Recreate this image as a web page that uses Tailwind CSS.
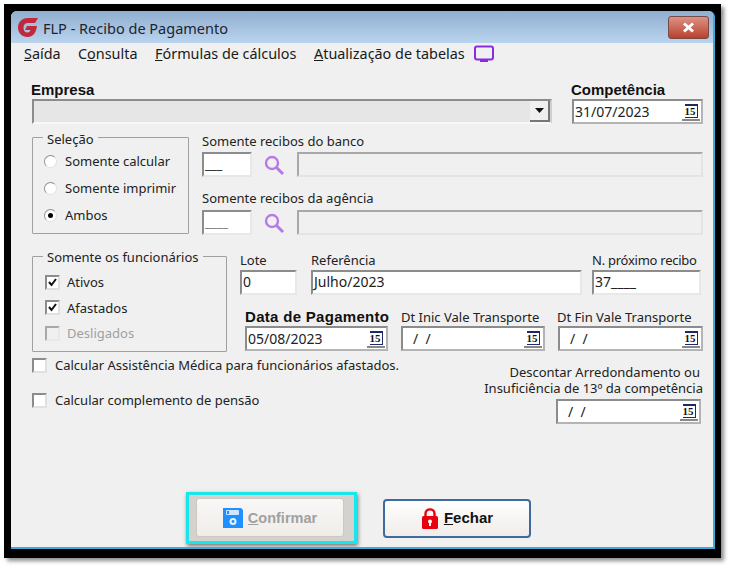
<!DOCTYPE html>
<html lang="pt-br">
<head>
<meta charset="UTF-8">
<title>FLP - Recibo de Pagamento</title>
<script src="https://cdn.jsdelivr.net/npm/@tailwindcss/browser@4"></script>
</head>
<body class="bg-white w-[734px] h-[571px] overflow-hidden font-['Noto_Sans',sans-serif] text-[13px] leading-[18px] text-[#222]">
<div class="ml-[4px] mt-[4px] w-[717px] h-[554px] bg-black pt-[7px] pl-[7px] pr-[6px] pb-[9px] shadow-[3px_3px_4px_rgba(0,0,0,0.45)]">
  <div class="w-[704px] h-[538px] bg-[#f0f0f0] rounded-t-[6px] border-r-2 border-b-2 border-[#3fa9d8] overflow-hidden">

    <!-- title bar -->
    <div class="h-[32px] flex items-center pl-[6px] bg-gradient-to-b from-[#90aecf] to-[#bad4ee]">
      <svg class="w-[22px] h-[22px]" viewBox="0 0 22 22"><path d="M21 2 H11 C4.500 2 1 6.500 1 11.500 C1 17 5 21 10.500 21 C16 21 19 17 20 10 H10 L8 14 H13.500 C13 15.500 12 16.500 10.500 16.500 C8 16.500 6.500 14.500 6.500 11.500 C6.500 9 8 7 11 7 H18 Z" fill="#c0283c"/></svg>
      <span class="ml-[4px] mt-[2px] text-[14.500px] text-[#1c2430]">FLP - Recibo de Pagamento</span>
      <div class="ml-auto mr-[4px] mt-[1px] w-[41px] h-[23px] rounded-[3px] border border-[#7a4a44] bg-gradient-to-b from-[#dc9184] to-[#b8402c] flex items-center justify-center">
        <svg class="w-[13px] h-[11px]" viewBox="0 0 13 11"><path d="M2 1.500 L11 9.500 M11 1.500 L2 9.500" stroke="#fff" stroke-width="3"/></svg>
      </div>
    </div>

    <!-- menu -->
    <div class="h-[24px] flex items-center pl-[13px] pb-[2px] text-[14.400px] text-[#1a1a1a]">
      <span class="w-[54px]"><u>S</u>aída</span>
      <span class="w-[77px]">C<u>o</u>nsulta</span>
      <span class="w-[159px]"><u>F</u>órmulas de cálculos</span>
      <span class="w-[159px]"><u>A</u>tualização de tabelas</span>
      <svg class="w-[22px] h-[20px]" viewBox="0 0 22 20"><rect x="2" y="2.500" width="18" height="13" rx="2" fill="none" stroke="#8a2be2" stroke-width="2"/><rect x="7" y="16" width="8" height="2" fill="#8a2be2"/></svg>
    </div>

    <div class="pl-[21px]">
      <!-- empresa / competencia -->
      <div class="flex mt-[15px] h-[43px]">
        <div class="w-[539px]">
          <div class="h-[17px] -ml-[1px] font-['Liberation_Sans',sans-serif] font-bold text-[15px] leading-[16px] text-[#111]">Empresa</div>
          <div class="w-[520px] h-[25px] bg-[#e6e6e6] border-2 border-t-[#8c8c8c] border-l-[#8c8c8c] border-r-[#d0d0d0] border-b-[#f8f8f8] flex justify-end">
            <div class="w-[20px] h-[21px] bg-[#f0f0f0] border-r-2 border-b-2 border-[#777] flex items-center justify-center">
              <svg class="w-[9px] h-[5px]" viewBox="0 0 9 5"><path d="M0 0 H9 L4.500 5 Z" fill="#111"/></svg>
            </div>
          </div>
        </div>
        <div>
          <div class="h-[17px] font-['Liberation_Sans',sans-serif] font-bold text-[15px] leading-[16px] text-[#111]">Competência</div>
          <div class="ml-[1px] w-[131px] h-[25px] bg-white border-2 border-t-[#8c8c8c] border-l-[#8c8c8c] border-r-[#b4b4b4] border-b-[#b4b4b4] flex items-center pl-[1px] text-[14px]">
            31/07/2023
            <span class="ml-auto mr-[1px] w-[18px] h-[19px] border-b-2 border-[#888] flex justify-center items-center"><span class="font-['Liberation_Serif',serif] font-bold text-[11px] leading-[11px] text-[#111] border border-t-2 border-[#1d2a6a] border-l-0 pr-[1px]">15</span></span>
          </div>
        </div>
      </div>

      <!-- selecao / recibos -->
      <div class="flex mt-[13px] h-[98px]">
        <fieldset class="w-[157px] h-[104px] -mt-[8px] border border-[#a0a0a0] rounded-[1px] pl-[11px]">
          <legend class="-ml-[1px] px-[4px] leading-[14px]"><span class="relative top-[2px]">Seleção</span></legend>
          <div class="flex flex-col gap-[9px] mt-[8px]">
            <label class="flex items-center gap-[8px] h-[18px]"><span class="w-[13px] h-[13px] rounded-full bg-white border border-[#909090] border-r-[#e0e0e0] border-b-[#e0e0e0]"></span>Somente calcular</label>
            <label class="flex items-center gap-[8px] h-[18px]"><span class="w-[13px] h-[13px] rounded-full bg-white border border-[#909090] border-r-[#e0e0e0] border-b-[#e0e0e0]"></span>Somente imprimir</label>
            <label class="flex items-center gap-[8px] h-[18px]"><span class="w-[13px] h-[13px] rounded-full bg-white border border-[#909090] border-r-[#e0e0e0] border-b-[#e0e0e0] flex items-center justify-center"><span class="w-[5px] h-[5px] rounded-full bg-black"></span></span>Ambos</label>
          </div>
        </fieldset>
        <div class="ml-[13px] -mt-[6px]">
          <div class="h-[18px]">Somente recibos do banco</div>
          <div class="flex items-center mt-[2px]">
            <div class="w-[50px] h-[25px] bg-white border-2 border-t-[#8c8c8c] border-l-[#8c8c8c] border-r-[#e8e8e8] border-b-[#e8e8e8] pl-[1px] leading-[20px] text-[#111]">___</div>
            <svg class="ml-[11px] w-[22px] h-[22px]" viewBox="0 0 22 22"><circle cx="9" cy="9" r="6" fill="none" stroke="#b57ae6" stroke-width="2.400"/><path d="M13.500 13.500 L20 20" stroke="#b57ae6" stroke-width="3"/></svg>
            <div class="ml-[12px] w-[406px] h-[25px] bg-[#f0f0f0] border-2 border-t-[#a8a8a8] border-l-[#a8a8a8] border-r-[#e4e4e4] border-b-[#e4e4e4]"></div>
          </div>
          <div class="h-[18px] mt-[12px]">Somente recibos da agência</div>
          <div class="flex items-center mt-[3px]">
            <div class="w-[50px] h-[25px] bg-white border-2 border-t-[#8c8c8c] border-l-[#8c8c8c] border-r-[#e8e8e8] border-b-[#e8e8e8] pl-[1px] leading-[20px] text-[#777]">____</div>
            <svg class="ml-[11px] w-[22px] h-[22px]" viewBox="0 0 22 22"><circle cx="9" cy="9" r="6" fill="none" stroke="#b57ae6" stroke-width="2.400"/><path d="M13.500 13.500 L20 20" stroke="#b57ae6" stroke-width="3"/></svg>
            <div class="ml-[12px] w-[406px] h-[25px] bg-[#f0f0f0] border-2 border-t-[#a8a8a8] border-l-[#a8a8a8] border-r-[#e4e4e4] border-b-[#e4e4e4]"></div>
          </div>
        </div>
      </div>

      <!-- funcionarios / datas -->
      <div class="flex mt-[21px] h-[100px]">
        <fieldset class="w-[195px] h-[103px] -mt-[8px] border border-[#a0a0a0] rounded-[1px] pl-[12px]">
          <legend class="-ml-[2px] px-[4px] leading-[14px]"><span class="relative top-[1px]">Somente os funcionários</span></legend>
          <div class="flex flex-col gap-[7.500px] mt-[10px]">
            <label class="flex items-center gap-[7px] h-[18px]"><span class="w-[15px] h-[15px] bg-white border-2 border-t-[#8c8c8c] border-l-[#8c8c8c] border-r-[#e0e0e0] border-b-[#e0e0e0] flex items-center justify-center"><svg class="w-[9px] h-[9px]" viewBox="0 0 9 9"><path d="M1 4 L3.500 7 L8 1" fill="none" stroke="#111" stroke-width="2"/></svg></span>Ativos</label>
            <label class="flex items-center gap-[7px] h-[18px]"><span class="w-[15px] h-[15px] bg-white border-2 border-t-[#8c8c8c] border-l-[#8c8c8c] border-r-[#e0e0e0] border-b-[#e0e0e0] flex items-center justify-center"><svg class="w-[9px] h-[9px]" viewBox="0 0 9 9"><path d="M1 4 L3.500 7 L8 1" fill="none" stroke="#111" stroke-width="2"/></svg></span>Afastados</label>
            <label class="flex items-center gap-[7px] h-[18px] text-[#a0a0a0]"><span class="w-[15px] h-[15px] bg-[#f0f0f0] border-2 border-t-[#a8a8a8] border-l-[#a8a8a8] border-r-[#e8e8e8] border-b-[#e8e8e8]"></span>Desligados</label>
          </div>
        </fieldset>
        <div class="ml-[13px] -mt-[6px]">
          <div class="flex">
            <div class="w-[71px]">
              <div class="h-[19px]">Lote</div>
              <div class="w-[57px] h-[25px] bg-white border-2 border-t-[#8c8c8c] border-l-[#8c8c8c] border-r-[#e8e8e8] border-b-[#e8e8e8] pl-[1px] leading-[20px] text-[14px]">0</div>
            </div>
            <div class="w-[281px]">
              <div class="h-[19px]">Referência</div>
              <div class="w-[271px] h-[25px] bg-white border-2 border-t-[#8c8c8c] border-l-[#8c8c8c] border-r-[#e8e8e8] border-b-[#e8e8e8] pl-[1px] leading-[20px] text-[14px]">Julho/2023</div>
            </div>
            <div>
              <div class="h-[19px] tracking-[-0.25px]">N. próximo recibo</div>
              <div class="w-[109px] h-[25px] bg-white border-2 border-t-[#8c8c8c] border-l-[#8c8c8c] border-r-[#e8e8e8] border-b-[#e8e8e8] pl-[1px] leading-[20px] text-[14px]">37____</div>
            </div>
          </div>
          <div class="flex mt-[13px]">
            <div class="ml-[5px] w-[156px]">
              <div class="h-[18px] font-['Liberation_Sans',sans-serif] font-bold text-[15px] tracking-[0.3px] text-[#111]">Data de Pagamento</div>
              <div class="w-[143px] h-[25px] bg-white border-2 border-t-[#8c8c8c] border-l-[#8c8c8c] border-r-[#b4b4b4] border-b-[#b4b4b4] flex items-center pl-[1px] text-[14px]">
                05/08/2023
                <span class="ml-auto mr-[1px] w-[18px] h-[19px] border-b-2 border-[#888] flex justify-center items-center"><span class="font-['Liberation_Serif',serif] font-bold text-[11px] leading-[11px] text-[#111] border border-t-2 border-[#1d2a6a] border-l-0 pr-[1px]">15</span></span>
              </div>
            </div>
            <div class="w-[157px]">
              <div class="h-[18px]">Dt Inic Vale Transporte</div>
              <div class="w-[144px] h-[25px] bg-white border-2 border-t-[#8c8c8c] border-l-[#8c8c8c] border-r-[#b4b4b4] border-b-[#b4b4b4] flex items-center pl-[10px] text-[14px]">
                <span class="whitespace-pre">/  /</span>
                <span class="ml-auto mr-[1px] w-[18px] h-[19px] border-b-2 border-[#888] flex justify-center items-center"><span class="font-['Liberation_Serif',serif] font-bold text-[11px] leading-[11px] text-[#111] border border-t-2 border-[#1d2a6a] border-l-0 pr-[1px]">15</span></span>
              </div>
            </div>
            <div>
              <div class="h-[18px] -ml-[1px]">Dt Fin Vale Transporte</div>
              <div class="w-[145px] h-[25px] bg-white border-2 border-t-[#8c8c8c] border-l-[#8c8c8c] border-r-[#b4b4b4] border-b-[#b4b4b4] flex items-center pl-[10px] text-[14px]">
                <span class="whitespace-pre">/  /</span>
                <span class="ml-auto mr-[1px] w-[18px] h-[19px] border-b-2 border-[#888] flex justify-center items-center"><span class="font-['Liberation_Serif',serif] font-bold text-[11px] leading-[11px] text-[#111] border border-t-2 border-[#1d2a6a] border-l-0 pr-[1px]">15</span></span>
              </div>
            </div>
          </div>
        </div>
      </div>

      <!-- opcoes / descontar -->
      <div class="flex -mt-[1px] h-[72px]">
        <div class="w-[440px]">
          <label class="flex items-center gap-[8px] h-[18px] whitespace-nowrap"><span class="w-[15px] h-[15px] bg-white border-2 border-t-[#8c8c8c] border-l-[#8c8c8c] border-r-[#e0e0e0] border-b-[#e0e0e0]"></span>Calcular Assistência Médica para funcionários afastados.</label>
          <label class="flex items-center gap-[8px] h-[18px] mt-[17px]"><span class="w-[15px] h-[15px] bg-white border-2 border-t-[#8c8c8c] border-l-[#8c8c8c] border-r-[#e0e0e0] border-b-[#e0e0e0]"></span>Calcular complemento de pensão</label>
        </div>
        <div class="ml-[10px] w-[221px] mt-[8px] flex flex-col items-end">
          <div class="text-right h-[16px] leading-[16px] whitespace-nowrap pr-[3px]">Descontar Arredondamento ou</div>
          <div class="text-right h-[16px] leading-[16px] whitespace-nowrap">Insuficiência de 13º da competência</div>
          <div class="mt-[3px] mr-[2px] w-[145px] h-[25px] bg-white border-2 border-t-[#8c8c8c] border-l-[#8c8c8c] border-r-[#b4b4b4] border-b-[#b4b4b4] flex items-center pl-[10px] text-[14px]">
            <span class="whitespace-pre">/  /</span>
            <span class="ml-auto mr-[1px] w-[18px] h-[19px] border-b-2 border-[#888] flex justify-center items-center"><span class="font-['Liberation_Serif',serif] font-bold text-[11px] leading-[11px] text-[#111] border border-t-2 border-[#1d2a6a] border-l-0 pr-[1px]">15</span></span>
          </div>
        </div>
      </div>

      <!-- botoes -->
      <div class="flex items-center mt-[64px] ml-[154px]">
        <div class="w-[171px] h-[52px] border-[3px] border-[#19e6ea] bg-[#d4d2cf] shadow-[1px_2px_4px_rgba(0,0,0,0.5)] flex items-center justify-center">
          <div class="w-[148px] h-[39px] -mt-[1px] -ml-[3px] rounded-[3px] border border-[#cfc8c0] bg-gradient-to-b from-[#f8f8f8] to-[#f0ece8] flex items-center justify-center gap-[5px] font-['Liberation_Sans',sans-serif] font-bold text-[14.500px] text-[#a0a0a0]">
            <svg class="w-[20px] h-[21px]" viewBox="0 0 20 21"><path d="M0 1 H18 L20 3 V21 H0 Z" fill="#1e90ff"/><rect x="3" y="3" width="13" height="5" rx="1" fill="#cfe6ff"/><rect x="4" y="4" width="2" height="3" fill="#1e90ff"/><circle cx="10" cy="14.500" r="3.500" fill="#e6f2ff"/><circle cx="10" cy="14.500" r="1.400" fill="#1e90ff"/></svg>
            <span><u>C</u>onfirmar</span>
          </div>
        </div>
        <div class="ml-[26px] w-[148px] h-[39px] rounded-[4px] border-2 border-[#3f6a9f] bg-gradient-to-b from-white to-[#f0ece8] flex items-center justify-center gap-[5px] font-['Liberation_Sans',sans-serif] font-bold text-[15px] text-[#111]">
          <svg class="w-[18px] h-[22px]" viewBox="0 0 18 22"><path d="M4.500 10 V6.500 C4.500 1 13.500 1 13.500 6.500 V10" fill="none" stroke="#e8000f" stroke-width="2.400"/><rect x="1" y="9" width="16" height="13" rx="1.500" fill="#e8000f"/><circle cx="9" cy="14.500" r="2" fill="#fff"/><rect x="8" y="15" width="2" height="4" fill="#fff"/></svg>
          <span><u>F</u>echar</span>
        </div>
      </div>
    </div>
  </div>
</div>
</body>
</html>
